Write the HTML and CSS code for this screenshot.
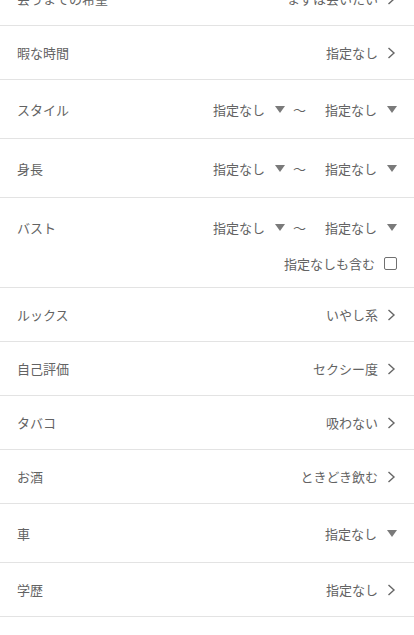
FILE: index.html
```html
<!DOCTYPE html>
<html lang="ja">
<head>
<meta charset="UTF-8" />
<meta name="viewport" content="width=device-width, initial-scale=1" />
<title>検索条件</title>
<link rel="stylesheet" href="styles.css">
</head>
<body>

<ul class="conditions">
  <li class="row">
    <span class="label">会うまでの希望</span>
    <span class="value">まずは会いたい<svg class="chevron" viewBox="0 0 9 12"><polyline points="1.5,1 7,6 1.5,11" /></svg></span>
  </li>
  <li class="row">
    <span class="label">暇な時間</span>
    <span class="value">指定なし<svg class="chevron" viewBox="0 0 9 12"><polyline points="1.5,1 7,6 1.5,11" /></svg></span>
  </li>
  <li class="row row-select">
    <span class="label">スタイル</span>
    <span class="range">
      <span class="select">指定なし<svg class="caret" viewBox="0 0 10 7"><polygon points="0,0 10,0 5,7" /></svg></span>
      <span class="tilde">〜</span>
      <span class="select">指定なし<svg class="caret" viewBox="0 0 10 7"><polygon points="0,0 10,0 5,7" /></svg></span>
    </span>
  </li>
  <li class="row row-select">
    <span class="label">身長</span>
    <span class="range">
      <span class="select">指定なし<svg class="caret" viewBox="0 0 10 7"><polygon points="0,0 10,0 5,7" /></svg></span>
      <span class="tilde">〜</span>
      <span class="select">指定なし<svg class="caret" viewBox="0 0 10 7"><polygon points="0,0 10,0 5,7" /></svg></span>
    </span>
  </li>
  <li class="row row-bust">
    <div class="row-main">
      <span class="label">バスト</span>
      <span class="range">
        <span class="select">指定なし<svg class="caret" viewBox="0 0 10 7"><polygon points="0,0 10,0 5,7" /></svg></span>
        <span class="tilde">〜</span>
        <span class="select">指定なし<svg class="caret" viewBox="0 0 10 7"><polygon points="0,0 10,0 5,7" /></svg></span>
      </span>
    </div>
    <label class="include">指定なしも含む<span class="checkbox"></span></label>
  </li>
  <li class="row">
    <span class="label">ルックス</span>
    <span class="value">いやし系<svg class="chevron" viewBox="0 0 9 12"><polyline points="1.5,1 7,6 1.5,11" /></svg></span>
  </li>
  <li class="row">
    <span class="label">自己評価</span>
    <span class="value">セクシー度<svg class="chevron" viewBox="0 0 9 12"><polyline points="1.5,1 7,6 1.5,11" /></svg></span>
  </li>
  <li class="row">
    <span class="label">タバコ</span>
    <span class="value">吸わない<svg class="chevron" viewBox="0 0 9 12"><polyline points="1.5,1 7,6 1.5,11" /></svg></span>
  </li>
  <li class="row">
    <span class="label">お酒</span>
    <span class="value">ときどき飲む<svg class="chevron" viewBox="0 0 9 12"><polyline points="1.5,1 7,6 1.5,11" /></svg></span>
  </li>
  <li class="row row-select">
    <span class="label">車</span>
    <span class="select">指定なし<svg class="caret" viewBox="0 0 10 7"><polygon points="0,0 10,0 5,7" /></svg></span>
  </li>
  <li class="row">
    <span class="label">学歴</span>
    <span class="value">指定なし<svg class="chevron" viewBox="0 0 9 12"><polyline points="1.5,1 7,6 1.5,11" /></svg></span>
  </li>
  <li class="row">
    <span class="label">年収</span>
    <span class="value">指定なし<svg class="chevron" viewBox="0 0 9 12"><polyline points="1.5,1 7,6 1.5,11" /></svg></span>
  </li>
</ul>

</body>
</html>
```

FILE: styles.css
```css
body {
  margin: 0;
  background: #fff;
  font-family: "Noto Sans CJK JP", "Noto Sans", sans-serif;
  font-size: 13px;
  color: #636363;
}

/* --- Lista condizioni --- */
.conditions {
  list-style: none;
  margin: -28px 0 0;
  padding: 0;
}
.row {
  box-sizing: border-box;
  height: 54px;
  padding: 0 17px;
  display: flex;
  align-items: center;
  justify-content: space-between;
  border-bottom: 1px solid #e3e3e3;
}
.row-select {
  height: 59px;
}
.row-bust {
  height: 90px;
  display: block;
  padding-bottom: 17px;
}
.row-main {
  height: 58px;
  display: flex;
  align-items: center;
  justify-content: space-between;
}

.label {
  line-height: 1;
}
.value {
  display: flex;
  align-items: center;
  line-height: 1;
}
.chevron {
  width: 9px;
  height: 12px;
  margin-left: 9px;
  margin-right: 1px;
  fill: none;
  stroke: #666;
  stroke-width: 1.4;
}

/* --- Selettori --- */
.range {
  display: flex;
  align-items: center;
}
.select {
  display: flex;
  align-items: center;
  line-height: 1;
}
.caret {
  width: 10px;
  height: 7px;
  margin-left: 10px;
  fill: #7a7a7a;
}
.tilde {
  margin: 0 19px 0 8px;
  line-height: 1;
}

/* --- Checkbox --- */
.include {
  height: 14px;
  display: flex;
  align-items: center;
  justify-content: flex-end;
  line-height: 1;
}
.checkbox {
  box-sizing: border-box;
  width: 13px;
  height: 13px;
  margin-left: 9px;
  border: 1px solid #707070;
  border-radius: 2px;
}
```
